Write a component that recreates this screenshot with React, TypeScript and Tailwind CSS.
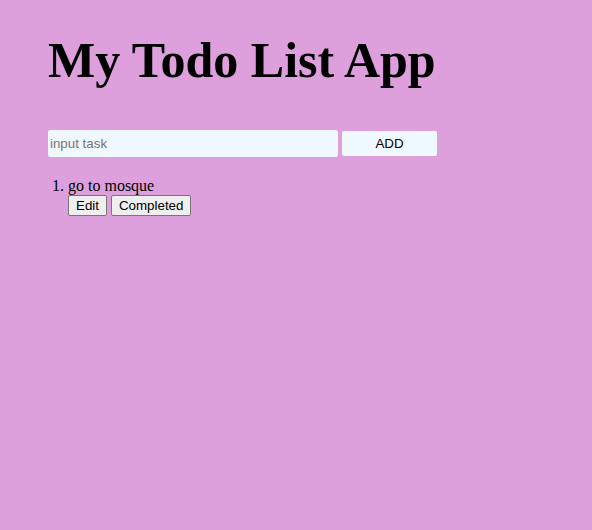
import React, { useState } from 'react';

const App: React.FC = () => {
  const [task, setTask] = useState('');
  const [todos] = useState<string[]>(['go to mosque']);

  return (
    <div className="min-h-[530px] bg-[#dda0dd] px-12 pt-[31px] font-['Liberation_Serif',serif] text-black">
      <h1 className="text-[50px] font-bold leading-[58px]">My Todo List App</h1>

      <div className="mt-[41px] flex items-center gap-[4px]">
        <input
          value={task}
          onChange={(e) => setTask(e.target.value)}
          placeholder="input task"
          className="h-[27px] w-[290px] rounded-[2px] bg-[#f0f8ff] px-[2px] font-['Liberation_Sans',sans-serif] text-[13.33px] outline-none placeholder:text-[#757575]"
        />
        <button className="h-[25px] w-[95px] rounded-[2px] bg-[#f0f8ff] font-['Liberation_Sans',sans-serif] text-[13.33px]">
          ADD
        </button>
      </div>

      <ol className="mt-[20px] list-decimal pl-[20px] text-[16px]">
        {todos.map((t, i) => (
          <li key={i} className="leading-[18px]">
            {t}
            <div className="flex gap-[4px]">
              <button className="h-[21px] rounded-[2px] border border-[#767676] bg-[#efefef] px-[7px] font-['Liberation_Sans',sans-serif] text-[13.33px]">
                Edit
              </button>
              <button className="h-[21px] rounded-[2px] border border-[#767676] bg-[#efefef] px-[7px] font-['Liberation_Sans',sans-serif] text-[13.33px]">
                Completed
              </button>
            </div>
          </li>
        ))}
      </ol>
    </div>
  );
};

export default App;
